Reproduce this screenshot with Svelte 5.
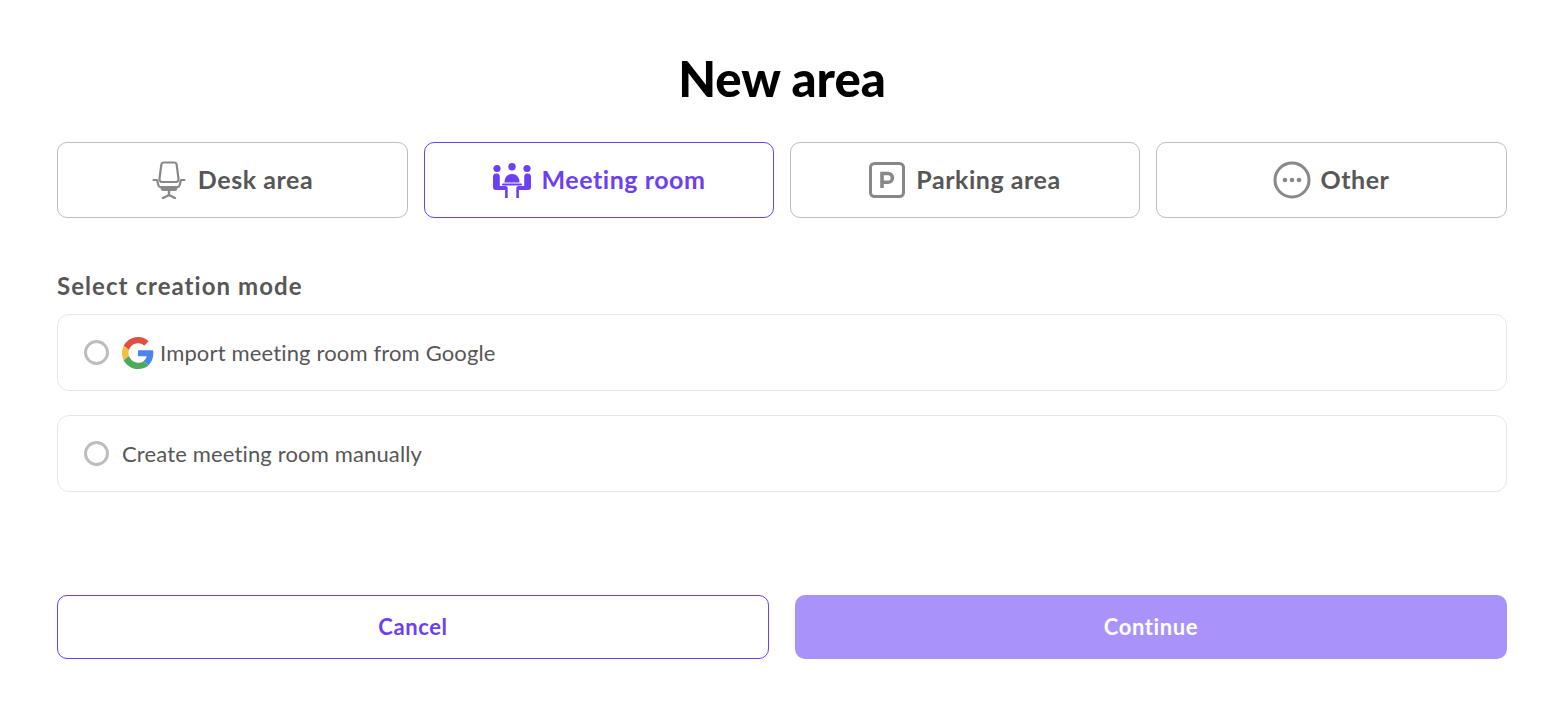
<script>
  const tabs = [
    { id: 'desk', label: 'Desk area' },
    { id: 'meeting', label: 'Meeting room' },
    { id: 'parking', label: 'Parking area' },
    { id: 'other', label: 'Other' }
  ];
  let active = $state('meeting');
  let mode = $state(null);
</script>

<main class="page">
  <h1>New area</h1>

  <div class="tabs">
    {#each tabs as tab}
      <button class="tab" class:active={active === tab.id} onclick={() => (active = tab.id)}>
        {#if tab.id === 'desk'}
          <svg class="ic-desk" width="34" height="38" viewBox="0 0 34 38" fill="none" stroke="#888" stroke-linecap="round" stroke-linejoin="round">
            <path d="M11.500 1.500h11c1.200 0 1.900.8 2.100 1.800l1.900 14.200c.3 2-.7 3.500-2.500 3.500H10c-1.800 0-2.800-1.500-2.500-3.500L9.400 3.300c.2-1 .9-1.800 2.100-1.800z" stroke-width="2.200" />
            <path d="M1.500 19h3.500l1.500 5.500c.3 1 1 1.500 2 1.500h17c1 0 1.700-.5 2-1.500L29 19h3.500" stroke-width="2.200" />
            <rect x="9" y="26" width="16" height="3.400" rx="1.700" fill="#888" stroke-width="1" />
            <path d="M17 30v4M11 37l6-3 6 3" stroke-width="2.400" />
          </svg>
        {:else if tab.id === 'meeting'}
          <svg class="ic-tight" width="40" height="36" viewBox="0 0 40 36" fill="currentColor">
            <circle cx="5" cy="6.500" r="3.600" />
            <circle cx="20" cy="4.800" r="3.700" />
            <circle cx="35" cy="6.500" r="3.600" />
            <path d="M12.500 20.500c0-5.500 3-8.500 7.500-8.500s7.500 3 7.500 8.500z" />
            <rect x="10" y="21.500" width="20" height="2" rx="1" />
            <path d="M1 15a3.400 3.400 0 0 1 6.800 0v9h5.700c1.200 0 2.200 1 2.200 2.200V36h-2.600v-8H4a3 3 0 0 1-3-3z" />
            <path d="M39 15a3.400 3.400 0 0 0-6.800 0v9h-5.700c-1.200 0-2.200 1-2.200 2.200V36h2.600v-8H36a3 3 0 0 0 3-3z" />
          </svg>
        {:else if tab.id === 'parking'}
          <svg class="ic-park" width="36" height="36" viewBox="0 0 36 36" fill="none" stroke="#888">
            <rect x="1.500" y="1.500" width="33" height="33" rx="4" stroke-width="3" />
            <path d="M13 26V11.500h6a4.300 4.300 0 0 1 0 8.800h-6" stroke-width="3.600" />
          </svg>
        {:else}
          <svg class="ic-tight" width="38" height="38" viewBox="0 0 38 38" fill="none" stroke="#888">
            <circle cx="19" cy="19" r="17" stroke-width="3" />
            <g fill="#888" stroke="none">
              <circle cx="12" cy="19" r="2.300" />
              <circle cx="19" cy="19" r="2.300" />
              <circle cx="26" cy="19" r="2.300" />
            </g>
          </svg>
        {/if}
        <span>{tab.label}</span>
      </button>
    {/each}
  </div>

  <h2>Select creation mode</h2>

  <div class="options">
    <button class="option" class:on={mode === 'google'} onclick={() => (mode = 'google')}>
      <span class="radio"></span>
      <svg class="glogo" width="32" height="32" viewBox="0 0 48 48">
        <path fill="#DD5144" d="M24 9.500c3.540 0 6.710 1.220 9.210 3.600l6.850-6.850C35.900 2.380 30.470 0 24 0 14.620 0 6.510 5.380 2.560 13.220l7.980 6.190C12.430 13.720 17.740 9.500 24 9.500z" />
        <path fill="#4C85EA" d="M46.980 24.550c0-1.570-.15-3.090-.38-4.550H24v9.020h12.940c-.58 2.960-2.260 5.480-4.780 7.180l7.730 6c4.510-4.180 7.090-10.360 7.090-17.650z" />
        <path fill="#F1BF42" d="M10.530 28.590c-.48-1.450-.76-2.990-.76-4.590s.27-3.140.76-4.590l-7.980-6.190C.92 16.460 0 20.120 0 24c0 3.880.92 7.540 2.560 10.780l7.970-6.190z" />
        <path fill="#4EA95C" d="M24 48c6.480 0 11.930-2.130 15.890-5.810l-7.730-6c-2.150 1.450-4.920 2.300-8.160 2.300-6.260 0-11.570-4.220-13.470-9.910l-7.980 6.190C6.510 42.620 14.620 48 24 48z" />
      </svg>
      <span>Import meeting room from Google</span>
    </button>
    <button class="option" class:on={mode === 'manual'} onclick={() => (mode = 'manual')}>
      <span class="radio"></span>
      <span>Create meeting room manually</span>
    </button>
  </div>

  <div class="actions">
    <button class="btn cancel">Cancel</button>
    <button class="btn continue">Continue</button>
  </div>
</main>

<style>
  :global(body) { margin: 0; background: #fff; }
  .page { box-sizing: border-box; height: 710px; padding: 48px 61px 0 57px; font-family: Lato, "Noto Sans", sans-serif; font-variant-ligatures: none; color: #575757; }
  h1 { margin: 0 0 33px; height: 61px; line-height: 61px; font-size: 49px; font-weight: 900; color: #000; text-align: center; }
  button { font-family: inherit; font-variant-ligatures: none; cursor: pointer; background: #fff; }

  .tabs { display: grid; grid-template-columns: 351fr 350fr 350fr 351fr; gap: 16px; }
  .tab { height: 76px; display: flex; align-items: center; justify-content: center; gap: 10px; border: 1px solid #bdbdbd; border-radius: 10px; color: #888; font-size: 25px; line-height: 28px; font-weight: 700; letter-spacing: .55px; padding: 0; }
  .tab span { color: #575757; padding-bottom: 2px; }
  .tab.active { border-color: #6c3ff5; color: #6c3ff5; }
  .tab.active span { color: #6c3ff5; }
  .ic-desk { margin-right: 2px; }
  .ic-park { margin-right: 1px; }
  .ic-tight { margin-right: -1px; }

  h2 { margin: 52px 0 12px; font-size: 24px; line-height: 32px; font-weight: 700; letter-spacing: 1.05px; color: #575757; }

  .options { display: flex; flex-direction: column; gap: 24px; }
  .option { height: 77px; display: flex; align-items: center; padding: 0 26px; border: 1px solid #e6e6e6; border-radius: 12px; font-size: 22px; letter-spacing: .15px; color: #575757; text-align: left; }
  .radio { box-sizing: border-box; width: 25px; height: 25px; border: 3px solid #bdbdbd; border-radius: 50%; margin-right: 13px; flex: none; }
  .option.on .radio { border: 7px solid #6c3ff5; }
  .glogo { flex: none; margin-right: 6px; }

  .actions { display: grid; grid-template-columns: 1fr 1fr; gap: 26px; margin-top: 103px; }
  .btn { height: 64px; border-radius: 10px; font-size: 22px; font-weight: 700; letter-spacing: .6px; padding: 0 0 2px; }
  .cancel { border: 1px solid #6c3ff5; color: #6c3ff5; }
  .continue { border: none; background: #a993fa; color: #fff; }
</style>
